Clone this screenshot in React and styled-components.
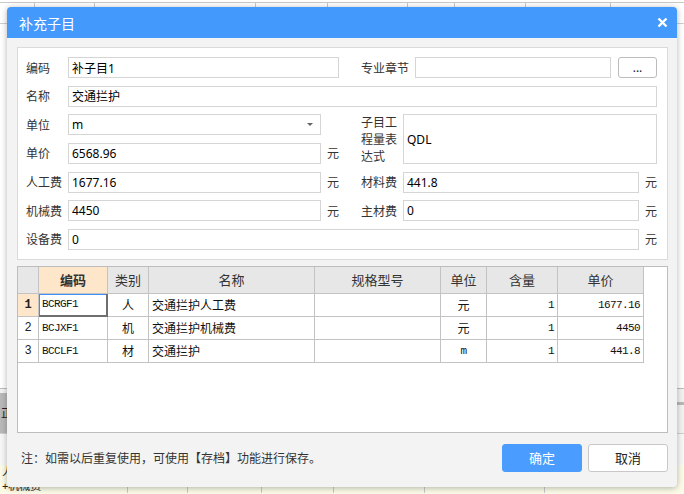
import React from "react";
import styled, { createGlobalStyle } from "styled-components";

const GlobalStyle = createGlobalStyle`
  html, body {
    margin: 0;
    padding: 0;
  }
  body {
    width: 684px;
    height: 494px;
    overflow: hidden;
    background: #fff;
    font-family: "Noto Sans", "Noto Sans CJK SC", sans-serif;
    font-size: 12px;
    color: #333;
  }
  * {
    box-sizing: border-box;
  }
`;

const Screen = styled.div`
  position: relative;
  width: 684px;
  height: 494px;
  overflow: hidden;
  display: flex;
  flex-direction: column;
  background: #fff;
`;

// ---- spreadsheet behind the dialog ----
const SheetTop = styled.div`
  flex: none;
  height: 3px;
  border-bottom: 1px solid #c9c9c9;
`;

const SheetRow = styled.div`
  flex: none;
  display: flex;
  height: ${(p) => p.$h}px;
  background: ${(p) => p.$bg || "#fff"};
  border-bottom: 1px solid ${(p) => p.$line || "#cfcfcf"};
`;

const SheetCell = styled.div`
  flex: none;
  width: ${(p) => p.$w}px;
  border-right: 1px solid #c9c9c9;
  padding-left: 2px;
  font-size: 11px;
  line-height: 13px;
  color: #222;
  white-space: nowrap;
  overflow: hidden;
`;

const SheetFill = styled.div`
  flex: 1;
`;

const TabBar = styled.div`
  flex: none;
  height: 46px;
  display: flex;
  background: #f2f2f2;
  border-top: 1px solid #bdbdbd;
  border-bottom: 1px solid #cfcfcf;
`;

const Tab = styled.div`
  width: 70px;
  margin-top: 4px;
  background: #b9b9b9;
  color: #222;
  font-size: 12px;
  display: flex;
  align-items: center;
  padding-left: 1px;
`;

const TabRest = styled.div`
  flex: 1;
  margin-top: 13px;
  height: 3px;
  background: #b8b8b8;
`;

const SheetGap = styled.div`
  flex: none;
  height: 31px;
  background: #f7f7f7;
`;

// ---- dialog ----
const Dialog = styled.div`
  position: absolute;
  left: 7px;
  top: 7px;
  width: 670px;
  height: 480px;
  display: flex;
  flex-direction: column;
  background: #f3f3f3;
  border-radius: 4px;
  box-shadow: 0 1px 6px rgba(0, 0, 0, 0.3);
  overflow: hidden;
`;

const TitleBar = styled.div`
  flex: none;
  height: 31px;
  display: flex;
  align-items: center;
  justify-content: space-between;
  padding: 0 9px 0 12px;
  background: #4499fd;
  color: #fff;
  font-size: 14px;
`;

const Body = styled.div`
  flex: 1;
  display: flex;
  flex-direction: column;
  padding: 9px 9px 0 10px;
`;

const place = (p) =>
  `grid-row: ${p.$r} / span ${p.$rs || 1}; grid-column: ${p.$c} / span ${p.$cs || 1};`;

const FormPanel = styled.div`
  flex: none;
  display: grid;
  grid-template-columns: 42px 253px 18px 22px 42px 236px 18px;
  grid-template-rows: repeat(7, 21px);
  row-gap: 7.67px;
  padding: 9px 10px 9px 8px;
  background: #fff;
  border: 1px solid #dadada;
`;

const Label = styled.div`
  ${place}
  display: flex;
  align-items: center;
  color: #333;
  white-space: nowrap;
`;

const WrapLabel = styled.div`
  ${place}
  align-self: center;
  width: 38px;
  line-height: 17px;
  color: #333;
`;

const Field = styled.div`
  ${place}
  display: flex;
  align-items: center;
  padding: 0 3px;
  background: #fff;
  border: 1px solid #d5d5d5;
  color: #000;
  white-space: nowrap;
`;

const Caret = styled.span`
  margin-left: auto;
  margin-right: 4px;
  border-left: 3px solid transparent;
  border-right: 3px solid transparent;
  border-top: 3px solid #666;
`;

const Unit = styled.div`
  ${place}
  display: flex;
  align-items: center;
  padding-left: 6px;
  color: #333;
`;

const ChapterGroup = styled.div`
  ${place}
  display: flex;
  align-items: stretch;
  gap: 7px;
`;

const ChapterLabel = styled.div`
  width: 47px;
  display: flex;
  align-items: center;
  white-space: nowrap;
  color: #333;
`;

const ChapterInput = styled.div`
  flex: 1;
  background: #fff;
  border: 1px solid #d5d5d5;
`;

const DotsButton = styled.div`
  width: 39px;
  display: flex;
  align-items: center;
  justify-content: center;
  background: #fff;
  border: 1px solid #bcbcbc;
  border-radius: 3px;
  color: #222;
  font-size: 12px;
`;

// ---- table ----
const TableBox = styled.div`
  flex: none;
  margin-top: 6px;
  height: 167px;
  background: #fff;
  border: 1px solid #bdbdbd;
`;

const TRow = styled.div`
  display: grid;
  grid-template-columns: 21px 69px 41px 166px 126px 46px 71px 86px;
  width: 626px;
  height: ${(p) => (p.$head ? 27 : 23)}px;
`;

const HeadCell = styled.div`
  display: flex;
  align-items: center;
  justify-content: center;
  background: ${(p) => (p.$active ? "#fde6c9" : "#e7e7e7")};
  border-right: 1px solid #c3c3c3;
  border-bottom: 1px solid #c3c3c3;
  font-size: 13px;
  font-weight: ${(p) => (p.$active ? 700 : 400)};
  color: #333;
`;

const NumCell = styled.div`
  display: flex;
  align-items: center;
  justify-content: center;
  background: ${(p) => (p.$active ? "#fde6c9" : "#fff")};
  border-right: 1px solid #c3c3c3;
  border-bottom: 1px solid #c3c3c3;
  font-family: "Liberation Mono", monospace;
  font-size: 12px;
  font-weight: ${(p) => (p.$active ? 700 : 400)};
  color: #222;
`;

const Cell = styled.div`
  display: flex;
  align-items: center;
  justify-content: ${(p) => p.$align || "flex-start"};
  padding: 0 3px;
  border-right: 1px solid #c3c3c3;
  border-bottom: 1px solid #c3c3c3;
  font-family: ${(p) =>
    p.$mono ? `"Liberation Mono", monospace` : `"Noto Sans CJK SC", sans-serif`};
  font-size: ${(p) => (p.$mono ? 11 : 12)}px;
  letter-spacing: ${(p) => (p.$mono ? "-0.6px" : "0")};
  color: #111;
  white-space: nowrap;
  ${(p) =>
    p.$focus &&
    `border-right: 2px solid #6f6f6f;
     border-bottom: 2px solid #6f6f6f;
     box-shadow: inset 1px 1px 0 #3d8ff8;`}
`;

// ---- footer ----
const Footer = styled.div`
  flex: none;
  display: flex;
  align-items: center;
  margin-top: 11px;
  height: 28px;
`;

const Note = styled.div`
  flex: 1;
  padding-left: 4px;
  color: #333;
  font-size: 12px;
`;

const Button = styled.button`
  width: 80px;
  height: 28px;
  margin-left: 6px;
  border-radius: 3px;
  font-family: "Noto Sans CJK SC", sans-serif;
  font-size: 13px;
  cursor: pointer;
  background: ${(p) => (p.$primary ? "#4a9dfe" : "#fff")};
  color: ${(p) => (p.$primary ? "#fff" : "#222")};
  border: 1px solid ${(p) => (p.$primary ? "#4a9dfe" : "#c8c8c8")};
`;

const topCols = [35, 60, 161, 72, 80, 47, 71, 85];
const bottomCols = [128, 60, 74, 72, 91, 120];

const rows = [
  { n: 1, code: "BCRGF1", kind: "人", name: "交通拦护人工费", unit: "元", qty: "1", price: "1677.16" },
  { n: 2, code: "BCJXF1", kind: "机", name: "交通拦护机械费", unit: "元", qty: "1", price: "4450" },
  { n: 3, code: "BCCLF1", kind: "材", name: "交通拦护", unit: "m", qty: "1", price: "441.8" },
];

const CloseIcon = () => (
  <svg width="11" height="11" viewBox="0 0 11 11">
    <path d="M1.5 1.5 L9.5 9.5 M9.5 1.5 L1.5 9.5" stroke="#fff" strokeWidth="2.4" />
  </svg>
);

export default function App() {
  return (
    <>
      <GlobalStyle />
      <Screen>
        <SheetTop />
        <SheetRow $h={21}>
          {topCols.map((w, i) => (
            <SheetCell key={i} $w={w} />
          ))}
        </SheetRow>
        <SheetFill />
        <TabBar>
          <Tab>正功</Tab>
          <TabRest />
        </TabBar>
        <SheetGap />
        <SheetRow $h={14} $bg="#fbfbe8" $line="#fbfbe8">
          <SheetCell $w={bottomCols[0]}>人工费</SheetCell>
          {bottomCols.slice(1).map((w, i) => (
            <SheetCell key={i} $w={w} />
          ))}
        </SheetRow>
        <SheetRow $h={15} $bg="#fbfbe8" $line="#fbfbe8">
          <SheetCell $w={bottomCols[0]}>+机械费</SheetCell>
          {bottomCols.slice(1).map((w, i) => (
            <SheetCell key={i} $w={w} />
          ))}
        </SheetRow>

        <Dialog>
          <TitleBar>
            <span>补充子目</span>
            <CloseIcon />
          </TitleBar>
          <Body>
            <FormPanel>
              <Label $r={1} $c={1}>编码</Label>
              <Field $r={1} $c={2} $cs={2}>补子目1</Field>
              <ChapterGroup $r={1} $c={5} $cs={3}>
                <ChapterLabel>专业章节</ChapterLabel>
                <ChapterInput />
                <DotsButton>...</DotsButton>
              </ChapterGroup>

              <Label $r={2} $c={1}>名称</Label>
              <Field $r={2} $c={2} $cs={6}>交通拦护</Field>

              <Label $r={3} $c={1}>单位</Label>
              <Field $r={3} $c={2}>
                m<Caret />
              </Field>
              <WrapLabel $r={3} $rs={2} $c={5}>子目工程量表达式</WrapLabel>
              <Field $r={3} $rs={2} $c={6} $cs={2}>QDL</Field>

              <Label $r={4} $c={1}>单价</Label>
              <Field $r={4} $c={2}>6568.96</Field>
              <Unit $r={4} $c={3}>元</Unit>

              <Label $r={5} $c={1}>人工费</Label>
              <Field $r={5} $c={2}>1677.16</Field>
              <Unit $r={5} $c={3}>元</Unit>
              <Label $r={5} $c={5}>材料费</Label>
              <Field $r={5} $c={6}>441.8</Field>
              <Unit $r={5} $c={7}>元</Unit>

              <Label $r={6} $c={1}>机械费</Label>
              <Field $r={6} $c={2}>4450</Field>
              <Unit $r={6} $c={3}>元</Unit>
              <Label $r={6} $c={5}>主材费</Label>
              <Field $r={6} $c={6}>0</Field>
              <Unit $r={6} $c={7}>元</Unit>

              <Label $r={7} $c={1}>设备费</Label>
              <Field $r={7} $c={2} $cs={5}>0</Field>
              <Unit $r={7} $c={7}>元</Unit>
            </FormPanel>

            <TableBox>
              <TRow $head>
                <HeadCell />
                <HeadCell $active>编码</HeadCell>
                <HeadCell>类别</HeadCell>
                <HeadCell>名称</HeadCell>
                <HeadCell>规格型号</HeadCell>
                <HeadCell>单位</HeadCell>
                <HeadCell>含量</HeadCell>
                <HeadCell>单价</HeadCell>
              </TRow>
              {rows.map((r) => (
                <TRow key={r.n}>
                  <NumCell $active={r.n === 1}>{r.n}</NumCell>
                  <Cell $mono $focus={r.n === 1}>{r.code}</Cell>
                  <Cell $align="center">{r.kind}</Cell>
                  <Cell>{r.name}</Cell>
                  <Cell />
                  <Cell $align="center" $mono={r.unit === "m"}>{r.unit}</Cell>
                  <Cell $align="flex-end" $mono>{r.qty}</Cell>
                  <Cell $align="flex-end" $mono>{r.price}</Cell>
                </TRow>
              ))}
            </TableBox>

            <Footer>
              <Note>注：如需以后重复使用，可使用【存档】功能进行保存。</Note>
              <Button $primary>确定</Button>
              <Button>取消</Button>
            </Footer>
          </Body>
        </Dialog>
      </Screen>
    </>
  );
}
